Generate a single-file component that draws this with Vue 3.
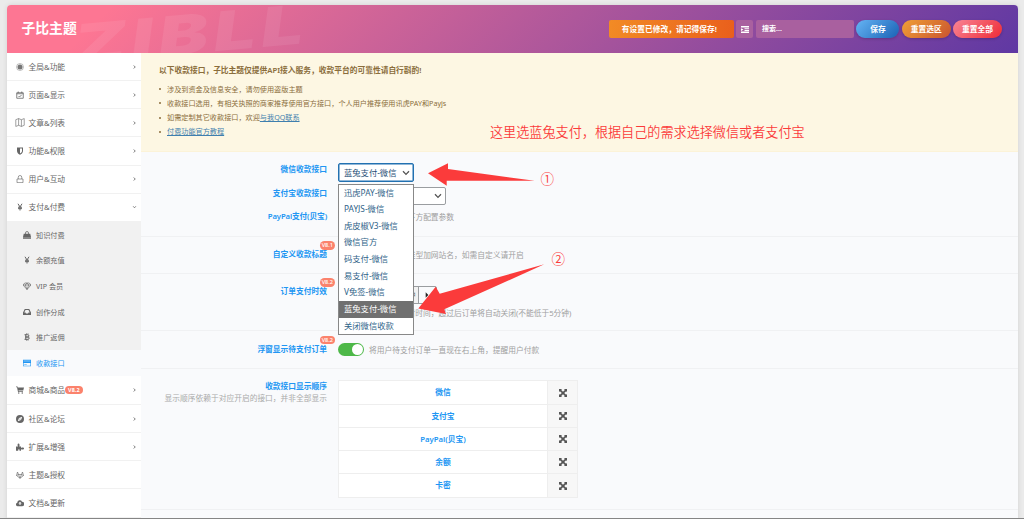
<template>
  <div class="page">
    <div class="panel">
      <header class="header">
        <span class="header__mark">ZIBLL</span>
        <h1 class="header__title">子比主题</h1>
        <div class="header__tools">
          <span class="notice-btn">有设置已修改，请记得保存!</span>
          <button class="expand">
            <svg viewBox="0 0 16 14"><path d="M0 0h16v3H0zM7 4.5h9v2H7zM7 7.8h9v2H7zM0 11h16v3H0zM0 4.5 5 7.2 0 10z" /></svg>
          </button>
          <span class="search">搜索...</span>
          <button class="btn btn--save">保存</button>
          <button class="btn btn--section">重置选区</button>
          <button class="btn btn--all">重置全部</button>
        </div>
      </header>

      <div class="body">
        <nav class="nav">
          <template v-for="item in menu" :key="item.text">
            <a class="nav__item" :class="{ 'nav__item--tall': item.badge }">
              <svg class="icon" :class="{ 'icon--wide': item.icon === 'map' }" viewBox="0 0 16 16" v-html="icons[item.icon]" />
              <span>{{ item.text }}</span>
              <em v-if="item.badge" class="badge">{{ item.badge }}</em>
              <svg v-if="item.arrow" class="nav__arrow" :class="{ 'nav__arrow--open': item.children }" viewBox="0 0 6 8">
                <path d="M1.5 1 4.5 4 1.5 7" />
              </svg>
            </a>
            <div v-if="item.children" class="sub">
              <a
                v-for="child in item.children"
                :key="child.text"
                class="sub__item"
                :class="{ 'sub__item--active': child.active }"
              >
                <svg class="icon" viewBox="0 0 16 16" v-html="icons[child.icon]" />
                <span>{{ child.text }}</span>
              </a>
            </div>
          </template>
        </nav>

        <main class="main">
          <section class="tips">
            <b class="tips__title">以下收款接口，子比主题仅提供API接入服务，收款平台的可靠性请自行斟酌!</b>
            <ul class="tips__list">
              <li>涉及到资金及信息安全，请勿使用盗版主题</li>
              <li>收款接口选用，有相关执照的商家推荐使用官方接口，个人用户推荐使用讯虎PAY和Payjs</li>
              <li>如需定制其它收款接口，欢迎<a>与我QQ联系</a></li>
              <li><a>付费功能官方教程</a></li>
            </ul>
          </section>

          <section class="field field--gateways">
            <div class="line">
              <label class="label">微信收款接口</label>
              <div class="select select--focus">
                <span>蓝兔支付-微信</span>
                <svg class="chevron" viewBox="0 0 8 6"><path d="M1 1.2 4 4.4 7 1.2" /></svg>
                <ul class="options">
                  <li v-for="o in options" :key="o" :class="{ selected: o === '蓝兔支付-微信' }">{{ o }}</li>
                </ul>
              </div>
            </div>
            <div class="line">
              <label class="label">支付宝收款接口</label>
              <div class="select select--wide">
                <svg class="chevron" viewBox="0 0 8 6"><path d="M1 1.2 4 4.4 7 1.2" /></svg>
              </div>
            </div>
            <div class="line">
              <label class="label label--mixed">PayPal支付(贝宝)</label>
              <i class="switch" />
              <span class="desc">启用后请在下方配置参数</span>
            </div>
          </section>

          <section class="field field--title">
            <label class="label">自定义收款标题<em class="badge badge--float">V8.1</em></label>
            <i class="switch" />
            <span class="desc">默认为订单类型加网站名，如需自定义请开启</span>
          </section>

          <section class="field field--time">
            <label class="label">订单支付时效<em class="badge badge--float">V8.2</em></label>
            <div class="time">
              <div class="stepper">
                <span class="stepper__btn"><svg viewBox="0 0 6 8"><path d="M5 0 1 4l4 4z" /></svg></span>
                <span class="stepper__value" />
                <span class="stepper__unit">分钟</span>
                <span class="stepper__btn"><svg viewBox="0 0 6 8"><path d="M1 0l4 4-4 4z" /></svg></span>
              </div>
              <p class="desc desc--below">用户订单的最长等待付时间，超过后订单将自动关闭(不能低于5分钟)</p>
            </div>
          </section>

          <section class="field field--float">
            <label class="label">浮窗显示待支付订单<em class="badge badge--float">V8.2</em></label>
            <i class="switch switch--on" />
            <span class="desc">将用户待支付订单一直现在右上角，提醒用户付款</span>
          </section>

          <section class="field field--order">
            <label class="label">收款接口显示顺序<small>显示顺序依赖于对应开启的接口，并非全部显示</small></label>
            <ul class="sorter">
              <li v-for="name in order" :key="name">
                <b>{{ name }}</b>
                <span class="sorter__handle">
                  <svg viewBox="0 0 16 16"><path d="M0 0h6L4.3 1.8 8 5.6l3.7-3.8L10 0h6v6l-1.8-1.7L10.4 8l3.8 3.7L16 10v6h-6l1.7-1.8L8 10.4l-3.7 3.8L6 16H0v-6l1.8 1.7L5.6 8 1.8 4.3 0 6z" /></svg>
                </span>
              </li>
            </ul>
          </section>
        </main>
      </div>
    </div>

    <div class="notes">
      <span class="notes__text">这里选蓝兔支付，根据自己的需求选择微信或者支付宝</span>
      <span class="notes__num notes__num--one">①</span>
      <span class="notes__num notes__num--two">②</span>
      <svg class="notes__arrows" viewBox="0 0 1024 519">
        <path d="M428 173.3 448 163.3V169L534.7 180.8 446.7 180.7V185.7z" />
        <path d="M418.3 308.5 435.7 286.7 439.7 293.7 544.3 264.3 444.3 309.3 446 314z" />
      </svg>
    </div>
    <div class="edge" />
  </div>
</template>

<script setup>
const icons = {
  target:
    '<circle cx="8" cy="8" r="7" fill="none" stroke="currentColor" stroke-width="1.2" opacity=".7"/><circle cx="8" cy="8" r="5" opacity=".9"/>',
  calendar:
    '<path d="M1.5 3.5h13v11h-13zM1.5 5.5h13M4.5 1v3M11.5 1v3M5 10l2 2 4-4" fill="none" stroke="currentColor" stroke-width="1.6"/>',
  map: '<path d="M.5 3l5-2 5 2 5-2v12l-5 2-5-2-5 2zM5.5 1v12M10.5 3v12" fill="none" stroke="currentColor" stroke-width="1.1"/>',
  shield: '<path fill-rule="evenodd" d="M2 1h12v7c0 4-3.5 6.5-6 7.5C5.5 14.5 2 12 2 8zM8 3v10c2-1 4-2.6 4-5V3z"/>',
  lock: '<path d="M2 8h12v7.3H2zM4.500 8V4.500a3.500 3.500 0 0 1 7 0V8" fill="none" stroke="currentColor" stroke-width="1.3"/>',
  yen: '<path d="M4 1.5 8 8l4-6.5M8 8v7M4 8.5h8M4 11.3h8" fill="none" stroke="currentColor" stroke-width="2"/>',
  bag: '<path d="M1.5 5.5h13L16 12H0zM0 12.700h16v2.800H0z"/><path d="M5 8V4a3 3 0 0 1 6 0v4" fill="none" stroke="currentColor" stroke-width="1.5"/>',
  gem: '<path d="M3.5 2h9L16 6l-8 9-8-9zM0 6h16M8 15 4.5 6 8 2l3.5 4z" fill="none" stroke="currentColor" stroke-width="1.3"/>',
  inbox: '<path fill-rule="evenodd" d="M3.5 2h9L16 9v5H0V9zM5 4 2.5 9H5l1 2h4l1-2h2.5L11 4z"/>',
  bitcoin:
    '<path d="M3 3.5h6.5a2.2 2.2 0 0 1 0 4.5H5h5a2.3 2.3 0 0 1 0 4.6H3M5.5 3v10M7 1v2M10 1v2M7 13v2M10 13v2" fill="none" stroke="currentColor" stroke-width="2"/>',
  card: '<path fill-rule="evenodd" d="M0 1.5h16v13H0zM1.2 3.5v1h13.6v-1zM1.2 8v5.3h13.6V8zM2.5 10.5h5v1.2h-5z"/>',
  cart: '<path d="M0 1h3l.5 2H16l-1.5 6H5l.3 1.5H14V12H4L2 2.5H0z"/><circle cx="5.5" cy="14" r="1.5"/><circle cx="12.5" cy="14" r="1.5"/>',
  compass:
    '<path fill-rule="evenodd" d="M8 0a8 8 0 1 1 0 16A8 8 0 0 1 8 0zM12.5 3.5 6 6l-2.5 6.5L10 10zM8 6.8a1.2 1.2 0 1 1 0 2.4 1.2 1.2 0 0 1 0-2.4z"/>',
  puzzle:
    '<path d="M0 7h4C2.5 4 3 1 5 1s2.8 3 1.5 6H10v3c3-1.5 6-1 6 1s-3 2.5-6 1.3v3.2H7c1-4-3.5-4-2.5 0H0z"/>',
  git: '<path d="M8 14.5 1 9 3 2l2 5h6l2-5 2 7zM5 7l3 7.500L11 7M1 9l4-2M15 9l-4-2" fill="none" stroke="currentColor" stroke-width="1.3"/>',
  cloud:
    '<path fill-rule="evenodd" d="M3.5 14.5a3.700 3.700 0 0 1-1-7.200A5 5 0 0 1 12 5.500a4.500 4.500 0 0 1 0 9zM8 5.500 4.700 9H7v3h2V9h2.300z"/>',
}

const menu = [
  { text: '全局&功能', icon: 'target', arrow: true },
  { text: '页面&显示', icon: 'calendar', arrow: true },
  { text: '文章&列表', icon: 'map', arrow: true },
  { text: '功能&权限', icon: 'shield', arrow: true },
  { text: '用户&互动', icon: 'lock', arrow: true },
  {
    text: '支付&付费',
    icon: 'yen',
    arrow: true,
    children: [
      { text: '知识付费', icon: 'bag' },
      { text: '余额充值', icon: 'yen' },
      { text: 'VIP 会员', icon: 'gem' },
      { text: '创作分成', icon: 'inbox' },
      { text: '推广返佣', icon: 'bitcoin' },
      { text: '收款接口', icon: 'card', active: true },
    ],
  },
  { text: '商城&商品', icon: 'cart', arrow: true, badge: 'V8.2' },
  { text: '社区&论坛', icon: 'compass', arrow: true },
  { text: '扩展&增强', icon: 'puzzle', arrow: true },
  { text: '主题&授权', icon: 'git' },
  { text: '文档&更新', icon: 'cloud' },
]

const options = [
  '迅虎PAY-微信',
  'PAYJS-微信',
  '虎皮椒V3-微信',
  '微信官方',
  '码支付-微信',
  '易支付-微信',
  'V免签-微信',
  '蓝兔支付-微信',
  '关闭微信收款',
]

const order = ['微信', '支付宝', 'PayPal(贝宝)', '余额', '卡密']
</script>

<style>
body {
  margin: 0;
  background: #ebebeb;
}
</style>

<style scoped>
* {
  box-sizing: border-box;
}

.page {
  position: relative;
  height: 519px;
  padding: 5px 6px 0 7px;
  overflow: hidden;
  background: #ebebeb;
  font-family: "Noto Sans", "Noto Sans CJK SC", sans-serif;
  font-size: 7.74px;
  line-height: 12px;
  color: #666;
}

ul,
p,
h1 {
  margin: 0;
  padding: 0;
  list-style: none;
}

svg {
  display: block;
  fill: currentColor;
}

.panel {
  height: 560px;
  border-radius: 4px 4px 0 0;
  overflow: hidden;
  background: #f9fafc;
  box-shadow: 0 0 5px rgba(0, 0, 0, 0.1);
}

.header {
  position: relative;
  display: flex;
  align-items: center;
  justify-content: space-between;
  height: 48px;
  padding: 0 16px 0 14.5px;
  overflow: hidden;
  background: linear-gradient(135deg, #fd7693 10%, #5f38a3);
  color: #fff;
}

.header__mark {
  position: absolute;
  left: 67px;
  top: 13px;
  font: italic 900 54px/54px Inter, sans-serif;
  letter-spacing: 4px;
  color: rgba(255, 255, 255, 0.08);
  transform: rotate(-5.2deg) scaleX(1.38);
  transform-origin: 0 50%;
}

.header__title {
  position: relative;
  font-size: 13.8px;
  line-height: 20px;
  font-weight: 700;
  margin-top: -3px;
}

.header__tools {
  display: flex;
  align-items: center;
  gap: 2.3px;
  font-weight: 600;
}

.notice-btn {
  width: 125px;
  height: 18.5px;
  padding-right: 4px;
  line-height: 18.5px;
  text-align: center;
  border-radius: 2px;
  background: linear-gradient(100deg, #f28b25, #e95f1c);
}

.expand {
  display: flex;
  align-items: center;
  justify-content: center;
  width: 17px;
  height: 18.5px;
  padding: 0;
  border: 0;
  border-radius: 2px;
  background: #a9609f;
  color: #fff;
}

.expand svg {
  width: 8px;
  height: 7px;
}

.search {
  width: 98px;
  height: 18.5px;
  margin-left: 0.7px;
  padding-left: 6px;
  line-height: 18.5px;
  font-size: 7px;
  border-radius: 2px;
  background: #a9609f;
}

.btn {
  width: 49px;
  height: 18.5px;
  padding: 0;
  border: 0;
  border-radius: 10px;
  font: inherit;
  color: #fff;
  box-shadow: 0 1px 3px rgba(0, 0, 0, 0.2);
}

.btn--save {
  width: 43px;
  background: linear-gradient(135deg, #65b4f4, #1a62b5);
}

.btn--section {
  background: linear-gradient(135deg, #f0a036, #c9532f);
}

.btn--all {
  background: linear-gradient(135deg, #f98595, #ee2b36);
}

.body {
  display: flex;
}

.nav {
  flex: 0 0 134px;
  height: 520px;
  background: #fff;
}

.nav__item {
  display: flex;
  align-items: center;
  height: 28.15px;
  padding: 0 5.5px 0 8px;
  border-bottom: 1px solid #f1f1f1;
}

.nav__item--tall {
  height: 29px;
}

.icon {
  width: 8px;
  height: 8px;
  margin: 0 5px 0 0.5px;
}

.icon--wide {
  width: 10px;
  height: 9px;
  margin: 0 4px 0 -0.5px;
}

.nav__arrow {
  width: 3px;
  height: 4px;
  margin-left: auto;
  fill: none;
  stroke: #777;
  stroke-width: 2;
}

.nav__arrow--open {
  transform: rotate(90deg);
}

.badge {
  padding: 0 3px;
  height: 8.5px;
  line-height: 8.5px;
  border-radius: 5px;
  background: #fb826c;
  color: #fff;
  font-size: 5.5px;
  font-weight: 700;
  font-style: normal;
}

.badge--float {
  position: absolute;
  right: -8px;
  top: -7px;
  height: 8.5px;
  line-height: 8.5px;
  padding: 0 2px;
  font-size: 5.6px;
  font-weight: 500;
  text-align: center;
}

.sub {
  background: #f1f1f1;
}

.sub__item {
  display: flex;
  align-items: center;
  height: 25.7px;
  padding-left: 15.5px;
  font-size: 7.15px;
}

.sub__item--active {
  background: #f9fafc;
  color: #2196f3;
}

.main {
  flex: 1;
  min-width: 0;
}

.tips {
  height: 98.5px;
  padding: 11px 18px;
  background: #fdf7e3;
  border-bottom: 1px solid #fcf3d8;
  color: #8a6d3b;
}

.tips__title {
  display: block;
  font-weight: 600;
}

.tips__list {
  margin-top: 5.5px;
  padding-left: 8px;
  font-size: 7.15px;
  line-height: 14.3px;
}

.tips__list li {
  position: relative;
}

.tips__list li::before {
  content: "";
  position: absolute;
  left: -8px;
  top: 6.5px;
  width: 2px;
  height: 2px;
  border-radius: 50%;
  background: currentColor;
}

.tips__list a {
  color: #3f7fae;
  text-decoration: underline;
}

.field {
  display: flex;
  align-items: flex-start;
  padding-top: 11.5px;
  border-bottom: 1px solid #f0f1f3;
}

.field--gateways {
  flex-direction: column;
  height: 85.3px;
}

.field--title {
  height: 37px;
}

.field--time {
  height: 57.2px;
}

.field--float {
  height: 37.8px;
  padding-top: 12px;
}

.field--order {
  height: 141px;
  padding-top: 11.7px;
}

.line {
  display: flex;
  align-items: flex-start;
  height: 23.7px;
}

.label {
  position: relative;
  width: 186px;
  margin-right: 11px;
  text-align: right;
  font-weight: 600;
  color: #2196f3;
}

.label--mixed {
  letter-spacing: -0.15px;
}

.label small {
  display: block;
  font-size: 7.74px;
  font-weight: 400;
  color: #aaa;
}

.field--order .label {
  margin-top: -0.5px;
}

.desc {
  margin-left: 5px;
  padding-top: 0.8px;
  color: #a0a0a0;
  white-space: nowrap;
}

.desc--below {
  margin: 2px 0 0;
}

.switch {
  width: 26px;
  height: 13px;
  margin-top: 0.5px;
  padding: 1px;
  border-radius: 7px;
  background: #ccc;
}

.switch::before {
  content: "";
  display: block;
  width: 11px;
  height: 11px;
  border-radius: 50%;
  background: #fff;
}

.switch--on {
  background: #4db848;
}

.switch--on::before {
  margin-left: auto;
}

.select {
  position: relative;
  display: flex;
  align-items: center;
  justify-content: space-between;
  width: 76px;
  height: 18.5px;
  padding: 0 3.5px 0 5px;
  border: 1px solid #9a9da0;
  border-radius: 2px;
  background: #fff;
  font-size: 8.3px;
  color: #2c3338;
}

.select--focus {
  height: 19px;
  border-color: #2271b1;
  box-shadow: inset 0 0 0 0.5px #2271b1;
  color: #1f4f76;
}

.select--wide {
  width: 108px;
  justify-content: flex-end;
}

.chevron {
  width: 8px;
  height: 6px;
  fill: none;
  stroke: #555;
  stroke-width: 1.3;
}

.options {
  position: absolute;
  z-index: 2;
  left: -1px;
  top: 19.5px;
  width: 76px;
  border: 1px solid #888;
  background: #fff;
  color: #2f6388;
  line-height: 16.65px;
}

.options li {
  padding-left: 5px;
}

.options .selected {
  background: #707070;
  color: #fff;
}

.time {
  display: flex;
  flex-direction: column;
  align-items: flex-start;
}

.stepper {
  display: flex;
  width: 98.5px;
  height: 18px;
  margin-top: 1px;
  border: 1px solid #9a9da0;
  border-radius: 2px;
  line-height: 16px;
  background: #f9fafc;
}

.stepper__btn {
  display: flex;
  align-items: center;
  justify-content: center;
  width: 17px;
  color: #222;
}

.stepper__btn svg {
  width: 4px;
  height: 6px;
}

.stepper__value {
  flex: 1;
  border-left: 1px solid #9a9da0;
  background: #fff;
}

.stepper__unit {
  padding: 0 2px 0 3px;
  background: #f1f1f1;
  border-right: 1px solid #9a9da0;
}

.sorter {
  width: 240px;
  border: 1px solid #eee;
  background: #fff;
}

.sorter li {
  display: flex;
  height: 23.2px;
  border-bottom: 1px solid #eee;
}

.sorter li:last-child {
  border-bottom: 0;
}

.sorter b {
  flex: 1;
  line-height: 23px;
  text-align: center;
  font-weight: 600;
  color: #2196f3;
}

.sorter__handle {
  display: flex;
  align-items: center;
  justify-content: center;
  width: 30px;
  border-left: 1px solid #eee;
  background: #f7f7f7;
  color: #555;
}

.sorter__handle svg {
  width: 8px;
  height: 8px;
}

.notes {
  position: absolute;
  inset: 0;
  z-index: 5;
  color: #fb3b3b;
  font-family: "Noto Sans CJK SC", sans-serif;
  font-size: 13.12px;
  font-weight: 350;
  line-height: 20px;
}

.notes__text {
  position: absolute;
  left: 490px;
  top: 122px;
  white-space: nowrap;
}

.notes__num {
  position: absolute;
  font-size: 13.5px;
}

.notes__num--one {
  left: 540.5px;
  top: 167.5px;
}

.notes__num--two {
  left: 551.5px;
  top: 248px;
}

.notes__arrows {
  width: 1024px;
  height: 519px;
}

.edge {
  position: absolute;
  left: 0;
  right: 0;
  bottom: 0;
  height: 1px;
  background: #858585;
}
</style>
